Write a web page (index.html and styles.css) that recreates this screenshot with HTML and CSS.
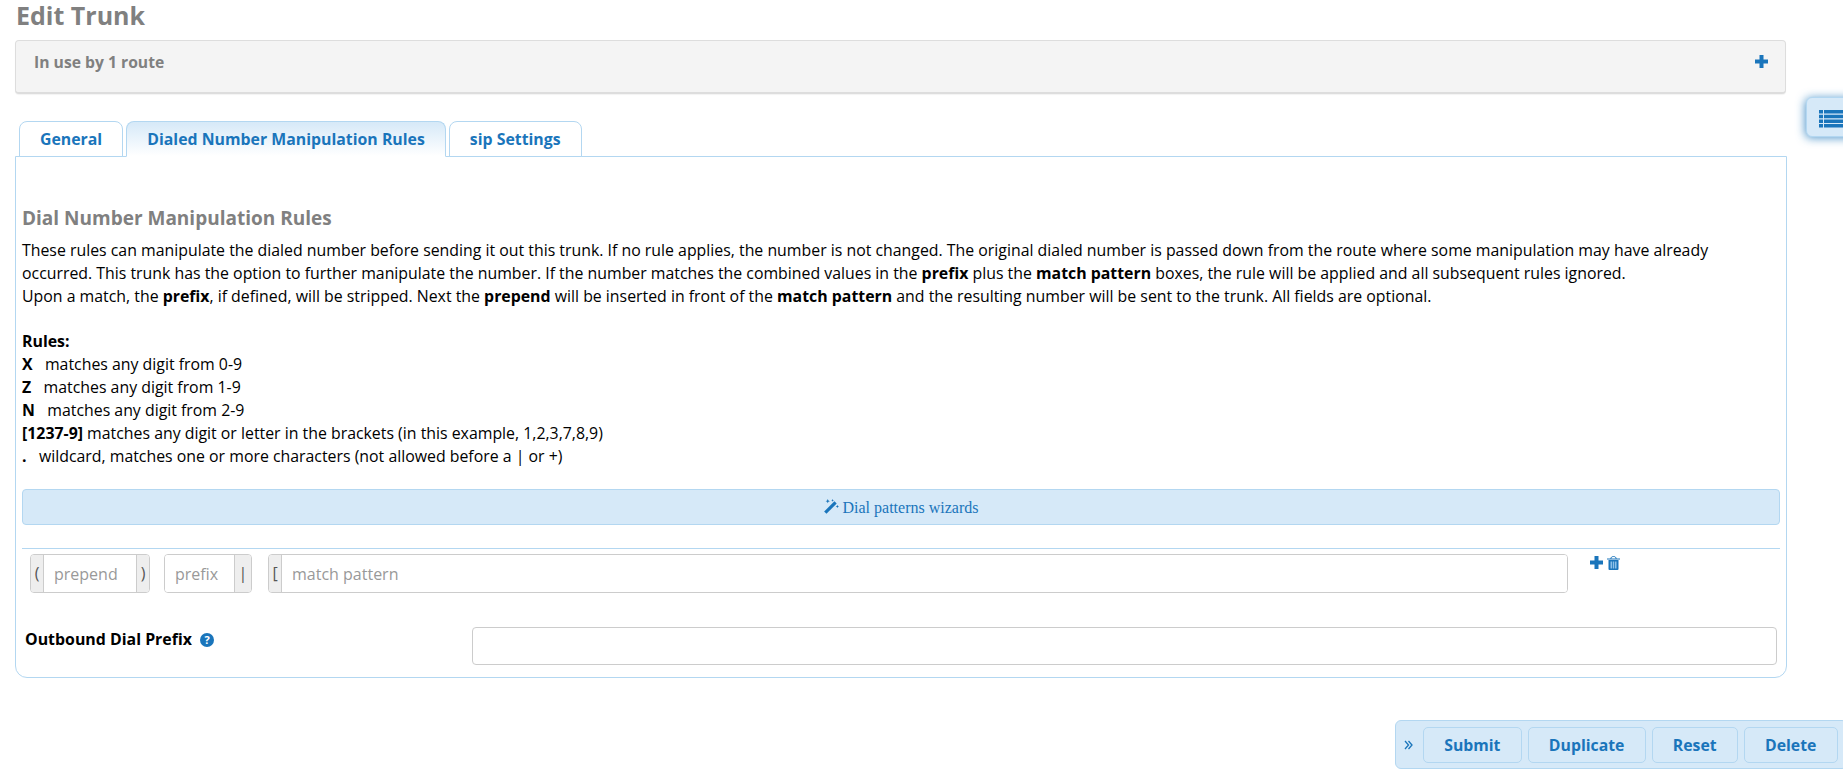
FILE: index.html
```html
<!DOCTYPE html>
<html>
<head>
<meta charset="utf-8">
<title>Edit Trunk</title>
<link rel="stylesheet" href="styles.css">
</head>
<body>
<main class="page">
  <h1 class="title">Edit Trunk</h1>
  <section class="usage"><span class="usage-text">In use by 1 route</span>
    <svg class="usage-plus" viewBox="0 0 13 13"><path d="M4.500 0h4v4.500H13v4H8.500V13h-4V8.500H0v-4h4.500z"/></svg>
  </section>
  <nav class="tabs">
    <a class="tab">General</a>
    <a class="tab tab-active">Dialed Number Manipulation Rules</a>
    <a class="tab">sip Settings</a>
  </nav>
  <section class="content">
    <h2 class="heading">Dial Number Manipulation Rules</h2>
    <p class="text">These rules can manipulate the dialed number before sending it out this trunk. If no rule applies, the number is not changed. The original dialed number is passed down from the route where some manipulation may have already<br>
    occurred. This trunk has the option to further manipulate the number. If the number matches the combined values in the <b>prefix</b> plus the <b>match pattern</b> boxes, the rule will be applied and all subsequent rules ignored.<br>
    Upon a match, the <b>prefix</b>, if defined, will be stripped. Next the <b>prepend</b> will be inserted in front of the <b>match pattern</b> and the resulting number will be sent to the trunk. All fields are optional.<br><br>
    <b>Rules:</b><br>
    <b>X</b>&nbsp;&nbsp; matches any digit from 0-9<br>
    <b>Z</b>&nbsp;&nbsp; matches any digit from 1-9<br>
    <b>N</b>&nbsp;&nbsp; matches any digit from 2-9<br>
    <b>[1237-9]</b> matches any digit or letter in the brackets (in this example, 1,2,3,7,8,9)<br>
    <b>.</b>&nbsp;&nbsp; wildcard, matches one or more characters (not allowed before a | or +)</p>
    <div class="wizard">
      <svg class="wand" viewBox="0 0 14 14"><path class="wand-stick" d="M1.200 12.800 10.800 3.200"/><path d="M3.500 0l.6 1.400 1.400.6-1.400.6-.6 1.400-.6-1.400L1.500 2l1.400-.6zM8 0l.4.9.9.4-.9.4-.4.9-.4-.9-.9-.4.9-.4zM12.500 5.500l.5 1 1 .5-1 .5-.5 1-.5-1-1-.5 1-.5z"/></svg>
      <span>Dial patterns wizards</span>
    </div>
    <div class="pattern">
      <span class="group g-prepend"><span class="addon">(</span><input class="field" placeholder="prepend"><span class="addon">)</span></span>
      <span class="group g-prefix"><input class="field" placeholder="prefix"><span class="addon addon-pipe">|</span></span>
      <span class="group g-match"><span class="addon">[</span><input class="field" placeholder="match pattern"></span>
      <span class="actions">
        <svg class="act-plus" viewBox="0 0 13 13"><path d="M4.500 0h4v4.500H13v4H8.500V13h-4V8.500H0v-4h4.500z"/></svg>
        <svg class="act-trash" viewBox="0 0 13 14"><path class="t-body" d="M1.500 4h10v9a1 1 0 0 1-1 1h-8a1 1 0 0 1-1-1z"/><path class="t-bar" d="M3.500 5.500h1.500V12.500H3.500zM5.750 5.500h1.500V12.500h-1.500zM8 5.500h1.500V12.500H8z"/><path class="t-top" d="M0 3h13M3.800 3C4 1 5 .5 6.500 .5S9 1 9.200 3"/></svg>
      </span>
    </div>
    <div class="prefix-row">
      <label class="prefix-label">Outbound Dial Prefix
        <svg class="help" viewBox="0 0 14 14"><circle cx="7" cy="7" r="7"/><text x="7" y="11" text-anchor="middle">?</text></svg>
      </label>
      <input class="prefix-input">
    </div>
  </section>
  <div class="side-tab">
    <svg viewBox="0 0 24 18"><path d="M0 0h4v3.500H0zM5 0h19v3.500H5zM0 4.700h4v3.500H0zM5 4.700h19v3.500H5zM0 9.400h4v3.500H0zM5 9.400h19v3.500H5zM0 14.100h4v3.500H0zM5 14.100h19v3.500H5z"/></svg>
  </div>
  <div class="action-bar">
    <svg class="chev" viewBox="0 0 9 10"><path d="M1 1l3.500 4L1 9M4.500 1 8 5 4.500 9"/></svg>
    <button class="btn">Submit</button>
    <button class="btn">Duplicate</button>
    <button class="btn">Reset</button>
    <button class="btn">Delete</button>
  </div>
</main>
</body>
</html>
```
FILE: styles.css
```css
* { box-sizing: border-box; }
html, body { margin: 0; padding: 0; background: #fff; }
body { font-family: "Open Sans", sans-serif; font-size: 16px; color: #000; overflow: hidden; height: 770px; }
.page { position: relative; height: 770px; padding: 0 0 0 15px; width: 1843px; }
.title { margin: 0; height: 40px; padding: 0 0 0 1px; font-size: 25px; line-height: 30px; font-weight: 700; color: #808080; }
.usage { width: 1771px; height: 54px; background: #f4f4f4; border: 1px solid #ddd; border-bottom-width: 2px; border-radius: 4px; display: flex; align-items: flex-start; justify-content: space-between; padding: 10px 17px 0 18px; box-shadow: 0 1px 1px rgba(0,0,0,.05); }
.usage-text { font-size: 15.700px; line-height: 22px; font-weight: 700; color: #808080; }
.usage-plus { width: 13px; height: 13px; margin-top: 4px; fill: #1a75bb; }
.tabs { display: flex; margin-top: 27px; padding-left: 4px; gap: 3px; height: 35px; position: relative; z-index: 1; }
.tab { height: 36px; padding: 5px 20px 0; border: 1px solid #b3d7f1; border-bottom: 1px solid #b3d7f1; border-radius: 8px 8px 0 0; font-size: 15.850px; line-height: 24px; font-weight: 700; color: #1a75bb; background: #fff; }
.tab-active { background: linear-gradient(#d6e9f8, #fff); border-bottom-color: #fff; }
.content { width: 1772px; height: 522px; border: 1px solid #b3d7f1; border-radius: 0 0 12px 12px; padding: 48px 6px 0 6px; }
.heading { margin: 0; font-size: 19px; line-height: 27px; font-weight: 700; color: #808080; }
.text { margin: 7px 0 0; font-size: 15.860px; line-height: 22.857px; }
.wizard { margin-top: 21px; height: 36px; padding-top: 2px; background: #d6e9f8; border: 1px solid #b3d7f1; border-radius: 4px; display: flex; align-items: center; justify-content: center; gap: 4px; font-family: "Liberation Serif", serif; font-size: 16px; color: #1a75bb; }
.wand { width: 15px; height: 15px; margin-top: -3px; fill: #1a75bb; }
.wand-stick { fill: none; stroke: #1a75bb; stroke-width: 3; }
.pattern { margin-top: 23px; border-top: 1px solid #b3d7f1; padding: 5px 0 0 8px; display: flex; align-items: flex-start; }
.group { display: flex; height: 39px; border: 1px solid #ccc; border-radius: 4px; overflow: hidden; }
.addon { background: #eee; color: #555; display: flex; align-items: center; justify-content: center; width: 12px; font-size: 16px; flex: none; }
.addon-pipe { width: 16px; }
.field { border: 0; border-left: 1px solid #ccc; border-right: 1px solid #ccc; outline: 0; min-width: 0; flex: 1; padding: 2px 10px 0; font-family: inherit; font-size: 16px; background: #fff; }
.field::placeholder { color: #999; opacity: 1; }
.g-prepend { width: 120px; }
.g-prefix { width: 88px; margin-left: 14px; }
.g-prefix .field { border-left: 0; }
.g-match { width: 1300px; margin-left: 16px; }
.g-match .field { border-right: 0; }
.actions { display: flex; gap: 4px; margin: 1px 0 0 22px; }
.act-plus { width: 13px; height: 13px; margin-top: 1px; fill: #1a75bb; }
.act-trash { width: 13px; height: 14px; margin-top: 1px; }
.t-body { fill: #1a75bb; }
.t-bar { fill: #8cc0e8; }
.t-top { fill: none; stroke: #1a75bb; stroke-width: 1; }
.prefix-row { display: flex; align-items: flex-start; margin-top: 34px; padding-left: 3px; }
.prefix-label { width: 447px; font-size: 15.900px; font-weight: 700; line-height: 24px; }
.help { width: 14px; height: 14px; margin-left: 4px; vertical-align: -2px; }
.help circle { fill: #1a75bb; }
.help text { fill: #fff; font-size: 11px; font-weight: 700; font-family: "Open Sans", sans-serif; }
.prefix-input { width: 1305px; height: 38px; border: 1px solid #ccc; border-radius: 4px; outline: 0; background: #fff; }
.side-tab { position: absolute; left: 1806px; top: 97px; width: 50px; height: 40px; background: #d6e9f8; border: 1px solid #b3d7f1; border-radius: 6px 0 0 6px; box-shadow: -1px 1px 10px rgba(26,117,187,.75); padding: 12px 0 0 12px; }
.side-tab svg { display: block; width: 24px; height: 18px; fill: #1a75bb; }
.action-bar { position: absolute; left: 1395px; top: 720px; width: 453px; height: 49px; background: #d6e9f8; border: 1px solid #b3d7f1; border-radius: 6px; display: flex; align-items: center; gap: 6px; padding-left: 8px; }
.chev { width: 9px; height: 10px; margin-right: 4px; fill: none; stroke: #1a75bb; stroke-width: 1.300; }
.btn { height: 36px; padding: 0 20.200px; border: 1px solid #b3d7f1; border-radius: 5px; background: #d6e9f8; color: #1a75bb; font-family: inherit; font-size: 15.800px; font-weight: 700; }
```
